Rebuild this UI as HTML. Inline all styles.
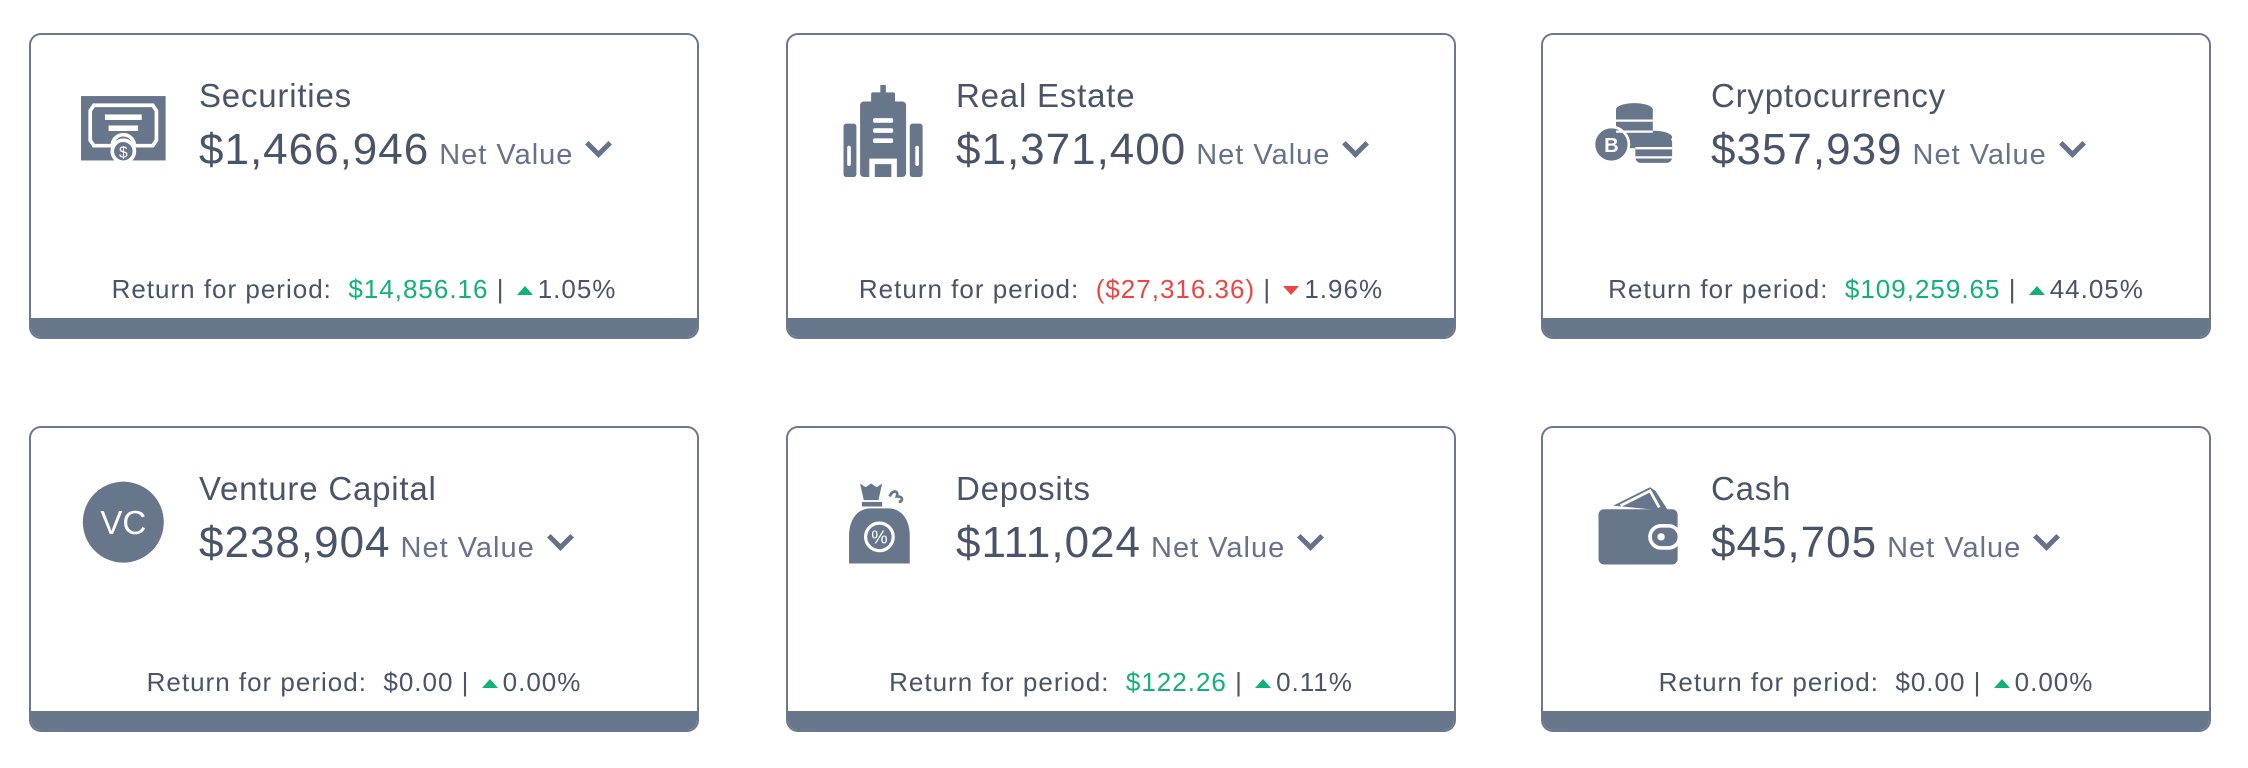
<!DOCTYPE html>
<html><head><meta charset="utf-8"><style>
body{margin:0;width:2248px;height:768px;background:#fff;font-family:"Liberation Sans",sans-serif;color:#4a5468;position:relative;overflow:hidden}
.card{position:absolute;width:670px;height:306px;border:2px solid #6b7890;border-radius:12px;overflow:hidden;box-sizing:border-box}
.bar{position:absolute;left:0;right:0;bottom:0;height:19px;background:#68768c}
.ic{position:absolute;left:50px;top:50px;width:92px;height:92px}
.t{position:absolute;left:168px;top:42px;font-size:33px;letter-spacing:0.8px;color:#4a5468}
.a{position:absolute;left:168px;top:90px;font-size:44px;letter-spacing:1px;color:#4a5468;white-space:nowrap}
.a span{font-size:29px;letter-spacing:1px;color:#66728a;margin-left:10px}
.a b{display:inline-block;width:14px;height:14px;border-right:5px solid #66728a;border-bottom:5px solid #66728a;transform:rotate(45deg);margin-left:16px;position:relative;top:-10px}
.r{position:absolute;left:0;right:0;top:239px;text-align:center;font-size:26px;letter-spacing:1px;color:#4a5468;white-space:nowrap}
.g{color:#10b27a}.red{color:#ef4444}
.up{display:inline-block;width:0;height:0;border-left:8px solid transparent;border-right:8px solid transparent;border-bottom:9px solid #10b27a;margin:0 5px 3px 4px}
.dn{display:inline-block;width:0;height:0;border-left:8px solid transparent;border-right:8px solid transparent;border-top:9px solid #ef4444;margin:0 5px 3px 4px}
</style></head><body>

<div class="card" style="left:29px;top:33px">
<svg class="ic" viewBox="0 0 100 100"><rect x="0" y="12" width="92" height="70" fill="#68768c"/><path d="M14 22h64l4 6v32l-4 6H58a12 12 0 0 0-24 0H14l-4-6V28z" fill="none" stroke="#fff" stroke-width="4"/><rect x="26" y="32" width="40" height="6" fill="#fff"/><rect x="30" y="44" width="32" height="6" fill="#fff"/><circle cx="46" cy="72" r="12" fill="#68768c" stroke="#fff" stroke-width="4"/><text x="46" y="79" font-size="17" fill="#fff" text-anchor="middle" font-family="Liberation Sans">$</text></svg>
<div class="t">Securities</div>
<div class="a">$1,466,946<span>Net Value</span><b></b></div>
<div class="r">Return for period:&nbsp; <span class="g">$14,856.16</span> | <i class="up"></i>1.05%</div>
<div class="bar"></div></div>

<div class="card" style="left:786px;top:33px">
<svg class="ic" viewBox="0 0 100 100"><g fill="#68768c"><rect x="46" y="0" width="6" height="10"/><rect x="36" y="8" width="26" height="12" rx="2"/><rect x="24" y="18" width="50" height="82" rx="4"/><rect x="6" y="42" width="14" height="58" rx="3"/><rect x="78" y="42" width="14" height="58" rx="3"/></g><g fill="#fff"><rect x="38" y="36" width="22" height="5" rx="2"/><rect x="38" y="47" width="22" height="5" rx="2"/><rect x="38" y="58" width="22" height="5" rx="2"/><path d="M34 100V80h30v20h-6V86H40v14z"/><rect x="10" y="66" width="4" height="22" rx="2"/><rect x="84" y="66" width="4" height="22" rx="2"/></g></svg>
<div class="t">Real Estate</div>
<div class="a">$1,371,400<span>Net Value</span><b></b></div>
<div class="r">Return for period:&nbsp; <span class="red">($27,316.36)</span> | <i class="dn"></i>1.96%</div>
<div class="bar"></div></div>

<div class="card" style="left:1541px;top:33px">
<svg class="ic" viewBox="0 0 100 100" style="top:58px"><g fill="#68768c"><ellipse cx="45" cy="18" rx="20" ry="7"/><rect x="25" y="18" width="40" height="42"/><ellipse cx="66" cy="48" rx="20" ry="7"/><rect x="46" y="48" width="40" height="28" rx="6"/><circle cx="20" cy="56" r="19" stroke="#fff" stroke-width="3"/></g><g stroke="#fff" stroke-width="2.5" fill="none"><path d="M25 30h40M25 42h40M46 60h40M46 70h40"/></g><text x="20" y="64" font-size="22" font-weight="bold" fill="#fff" text-anchor="middle" font-family="Liberation Sans">B</text></svg>
<div class="t">Cryptocurrency</div>
<div class="a">$357,939<span>Net Value</span><b></b></div>
<div class="r">Return for period:&nbsp; <span class="g">$109,259.65</span> | <i class="up"></i>44.05%</div>
<div class="bar"></div></div>

<div class="card" style="left:29px;top:426px">
<svg class="ic" viewBox="0 0 100 100"><circle cx="46" cy="48" r="44" fill="#68768c"/><text x="46" y="61" font-size="36" fill="#fff" text-anchor="middle" font-family="Liberation Sans">VC</text></svg>
<div class="t">Venture Capital</div>
<div class="a">$238,904<span>Net Value</span><b></b></div>
<div class="r">Return for period:&nbsp; $0.00 | <i class="up"></i>0.00%</div>
<div class="bar"></div></div>

<div class="card" style="left:786px;top:426px">
<svg class="ic" viewBox="0 0 100 100"><g fill="#68768c"><path d="M24 6l6 4 6-4 6 4 6-4-4 18H28z"/><rect x="26" y="26" width="22" height="5"/><path d="M36 33c-18 0-24 16-24 30v30h66V63c0-14-6-30-24-30z"/><path d="M56 20c4-8 10-6 8 0 8 0 6 6 2 6" fill="none" stroke="#68768c" stroke-width="3"/></g><circle cx="45" cy="64" r="15" fill="none" stroke="#fff" stroke-width="3.5"/><text x="45" y="71" font-size="20" fill="#fff" text-anchor="middle" font-family="Liberation Sans">%</text></svg>
<div class="t">Deposits</div>
<div class="a">$111,024<span>Net Value</span><b></b></div>
<div class="r">Return for period:&nbsp; <span class="g">$122.26</span> | <i class="up"></i>0.11%</div>
<div class="bar"></div></div>

<div class="card" style="left:1541px;top:426px">
<svg class="ic" viewBox="0 0 100 100"><g fill="#68768c"><path d="M22 30l40-20 6 4 14 22z"/><rect x="6" y="34" width="86" height="60" rx="6"/></g><path d="M30 30l32-16 10 18" fill="none" stroke="#fff" stroke-width="3"/><rect x="62" y="52" width="32" height="24" rx="12" fill="#68768c" stroke="#fff" stroke-width="4"/><circle cx="74" cy="64" r="4" fill="#fff"/></svg>
<div class="t">Cash</div>
<div class="a">$45,705<span>Net Value</span><b></b></div>
<div class="r">Return for period:&nbsp; $0.00 | <i class="up"></i>0.00%</div>
<div class="bar"></div></div>

</body></html>
